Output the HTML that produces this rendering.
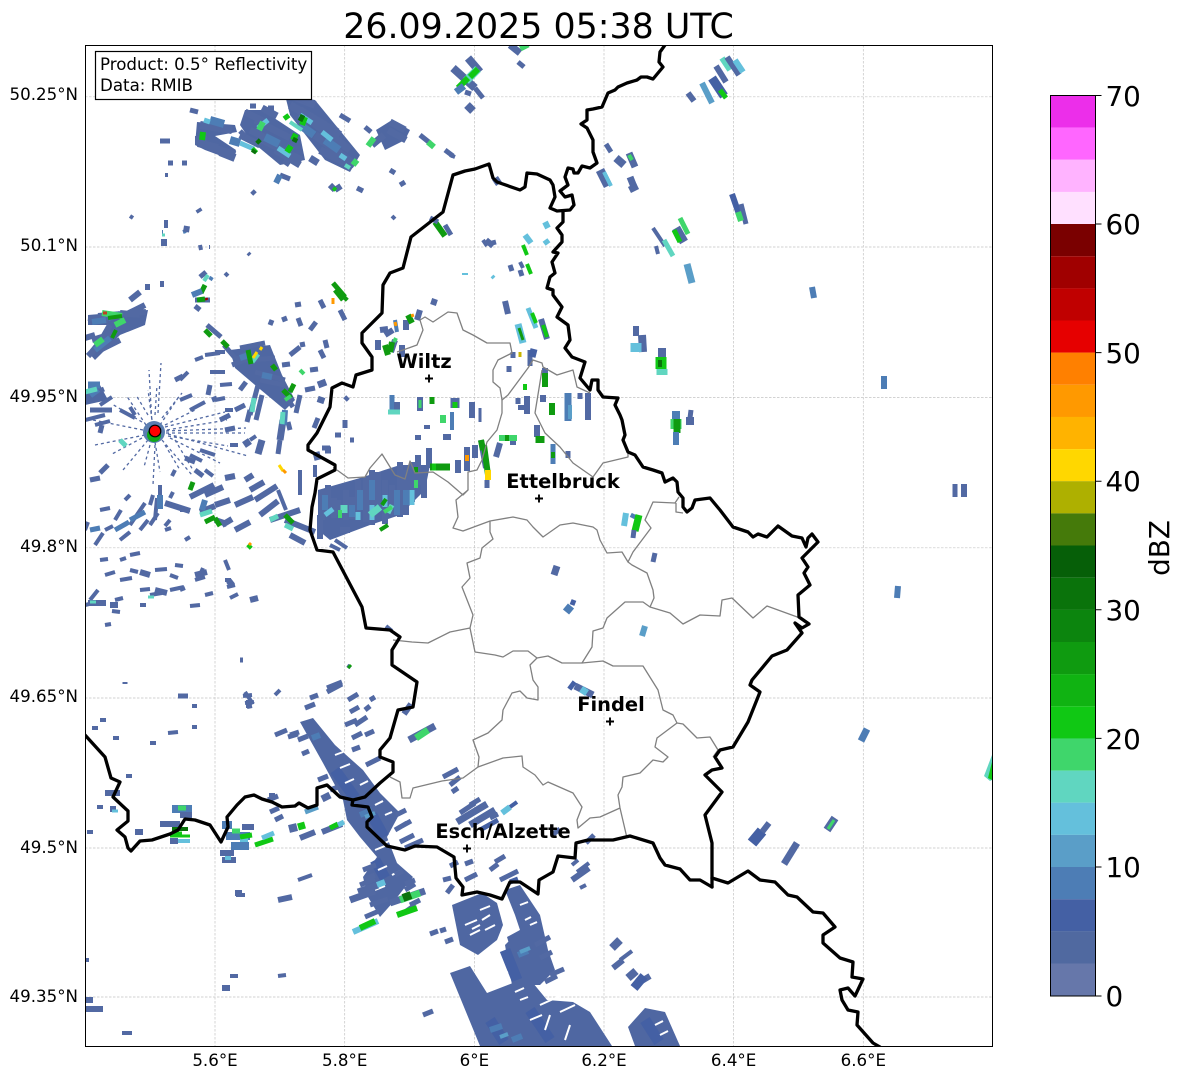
<!DOCTYPE html>
<html><head><meta charset="utf-8"><title>Radar</title>
<style>
html,body{margin:0;padding:0;background:#fff;width:1184px;height:1081px;overflow:hidden}
svg{display:block}
text{font-family:"DejaVu Sans",sans-serif;fill:#000}
.r path{fill:none}
.a{stroke:#5269a3}.b{stroke:#4460a4}.c{stroke:#4d7db5}.d{stroke:#5a9ec8}.e{stroke:#64c0dc}.f{stroke:#60d6c0}.g{stroke:#3fd66b}.h{stroke:#10c814}.i{stroke:#0f9b10}.j{stroke:#0a730b}
.s2{stroke-width:3}.s3{stroke-width:4}.s4{stroke-width:5}.s5{stroke-width:6}.s6{stroke-width:7}.s7{stroke-width:8}.s8{stroke-width:9}.s10{stroke-width:11}
.sp{stroke-width:1.3;stroke-dasharray:3 3}
</style></head><body>
<svg width="1184" height="1081" viewBox="0 0 1184 1081" xmlns="http://www.w3.org/2000/svg">
<defs><clipPath id="ax"><rect x="85" y="45" width="907" height="1001"/></clipPath></defs>
<rect width="1184" height="1081" fill="#fff"/>
<text x="538.5" y="38" font-size="34.8" text-anchor="middle">26.09.2025 05:38 UTC</text>

<g stroke="#c4c4c4" stroke-width=".7" stroke-dasharray="2.5 1.5">
<path d="M215 45V1046M344.7 45V1046M474.4 45V1046M604 45V1046M733.6 45V1046M863.3 45V1046M85 96.8H992M85 247H992M85 397.5H992M85 547.8H992M85 698H992M85 848H992M85 997H992" fill="none"/>
</g>

<g clip-path="url(#ax)" class="r">
<!-- south masses -->
<g fill="#4f67a2">
<polygon points="300,722 313,718 335,745 363,770 380,793 400,813 387,837 397,863 413,877 395,900 380,917 368,897 363,877 377,857 360,837 347,820 343,800 323,763"/>
<polygon points="450,973 470,966 487,993 513,983 513,957 507,937 520,930 543,967 533,983 547,1000 573,1002 590,1012 612,1046 480,1046"/>
<polygon points="452,905 482,893 497,903 503,925 497,940 478,955 460,945"/>
<polygon points="505,890 520,885 540,915 548,950 555,970 540,985 512,985 505,945 520,930 515,915"/>
<polygon points="628,1027 645,1008 665,1012 680,1046 635,1046"/>
<!-- NW -->
<polygon points="197,122 235,125 237,132 215,136 236,150 232,160 205,150 195,145"/>
<polygon points="245,110 262,110 300,135 305,160 280,165 250,140 240,125"/>
<polygon points="285,95 315,100 360,155 350,172 325,160 290,115"/>
<polygon points="376,130 392,120 410,130 405,140 385,150"/>
<!-- West -->
<polygon points="88,315 148,310 145,325 120,335 95,360 88,352 110,325 88,325"/>
<polygon points="230,350 270,345 282,375 295,400 285,410 255,385 235,368"/>
<polygon points="318,490 360,478 400,465 430,465 425,490 400,515 370,525 330,540 318,530"/>
<polygon points="85,392 100,385 108,400 85,405"/>
</g>
<path class="b s10" d="M505 950l12 30M490 1020l14 22M645 1020l14 22M335 770l20 28M372 815l12 22M530 1010l20 30M375 860l10 18"/>
<path class="c s5" d="M490 1030l12 -4M518 955l10 -4M312 738l8 -3M360 815l12 -5M512 1040l10 -4"/>
<path class="d s3" d="M520 952l10 -4M365 817l10 -4M500 1037l8 -3"/>
<path stroke="#fff" stroke-width="2" d="M335 755l8 -3M340 768l10 -4M345 783l9 -4M360 785l8 -4M375 805l8 -4M385 815l7 -3M395 838l-10 5M375 850l10 -4M378 870l9 -4M392 875l8 -4M375 890l10 -4M480 910l10 -4M465 925l12 -5M490 915l-8 5M470 935l10 -5M520 905l8 -3M530 925l7 -3M500 975l8 -3M515 992l9 -4M520 1000l8 -3M540 1005l20 -9M560 1012l15 -7M545 1030l5 -15M565 1040l5 -15M525 920l6 -3M485 930l10 -5M480 925l-8 4M530 1020l12 -5M655 1025l8 -4M660 1035l8 -4"/>
<!-- streaks around south -->
<path class="a s4" d="M305 708l10 -4M310 698l8 -3M275 735l12 -5M288 737l10 -3M302 754l7 -3M348 700l10 -6M350 712l9 -5M345 725l12 -5M352 738l10 -5M352 750l8 -3M365 735l9 -4M365 710l5 -4M370 700l5 -3M355 725l12 -8M327 692l15 -8M268 800l10 -4M270 812l9 -4M275 820l8 -4M330 790l8 -3M318 780l10 -4M366 765l14 -7M396 815l10 -5M395 830l12 -7M400 842l14 -7M405 848l18 -8M402 826l9 -5M363 870l13 -5M360 885l15 -6M375 875l-10 4M370 905l18 -6M365 917l14 -6M405 890l10 -6M395 875l8 -4M415 880l-10 4M410 905l10 -5M405 912l10 -7M443 777l15 -8M450 785l10 -8M452 792l6 -4M460 813l15 -10M470 805l10 -6M490 818l8 -4M552 835l8 -6M586 843l8 -8M430 934l8 -3M440 931l6 -2M445 942l8 -3M423 1015l10 -4M443 880l8 -2M447 893l6 -8M450 866l8 -4M465 880l12 -6M490 870l8 -6M500 880l18 -9M495 862l10 -6M465 864l8 -3M535 945l15 -8M540 958l12 -6M545 982l12 -6M550 975l14 -6M290 735l9 -3M298 740l10 -4"/>
<path class="a s6" d="M457 822l30 -18M470 825l25 -15M330 795l-8 4M358 892l20 -7M350 900l25 -9"/>
<path class="b s4" d="M480 830l18 -10M510 882l8 -3"/>
<path class="a s3" d="M572 865l6 -5M577 872l12 -9M620 960l12 -9M580 888l6 -3"/>
<path class="a s5" d="M572 880l17 -12M613 968l10 -8M640 982l10 -6M404 714l7 -10"/>
<path class="a s7" d="M612 948l8 -8M628 978l8 -7"/>
<path class="b s8" d="M634 988l10 -12"/>
<path class="a s6" d="M409 740l26 -14M390 903l35 -12"/>
<path class="g s6" d="M416 738l12 -8"/>
<path class="e s5" d="M353 932l25 -11M502 813l8 -6M377 885l8 -3"/>
<path class="h s5" d="M360 928l15 -7M397 915l20 -7"/>
<path class="g s6" d="M400 900l20 -7"/>
<path class="j s7" d="M403 898l8 -3"/>
<path class="b s3" d="M510 807l7 -5"/>
<!-- SW region -->
<path class="a s3" d="M243 696l9 -1M245 703l9 -1M247 707l5 -1M192 706l5 0M100 720h6M92 728h6M113 738h6M150 743h6M168 733l10 -1M192 727h5M126 776h6M97 807h6M87 832h6M245 895h-9M298 880l14 -5M230 976h8M278 976l8 -1M122 1033h10M85 960h4M275 795h-6"/>
<path class="a s5" d="M105 793h15M110 809h6M135 832h8M278 900l14 -3M222 988h8M85 1000h8M85 1009h18M235 893h7"/>
<path class="c s7" d="M172 809h20M222 825h10M226 836h24M231 846h18"/>
<path class="g s4" d="M178 808h8M232 831h8"/>
<path class="a s5" d="M180 815h12M160 824h20M170 841h8M220 853h14M222 860h14M242 827h12"/>
<path class="j s3" d="M172 829h16"/><path class="h s2" d="M170 836h20M172 833h10"/><path class="e s3" d="M178 841h12M240 840h8M225 858h6"/>
<path class="h s4" d="M240 837l12 -2M255 845l18 -6"/><path class="e s4" d="M262 838l12 -5"/>
<path class="a s7" d="M289 829l8 -2"/><path class="h s6" d="M298 827l7 -2"/>
<path class="a s5" d="M322 832l20 -8M300 838l15 -6"/><path class="h s4" d="M330 828l8 -4"/><path class="e s4" d="M338 825l6 -3"/>
<path class="d s4" d="M305 812l13 -5"/><path class="e s2" d="M112 811h6"/>
<!-- west scattered: lower left -->
<path class="a s3" d="M100 560l8 -1M105 575l10 -3M90 600l8 -10M85 605l12 -3M105 625l6 -1M120 580l12 -2M130 570l8 2M140 590l10 -1M150 595l12 -2M170 590l14 -3M155 570l12 -1M175 565l8 1M195 580l10 -3M200 575l3 -7M205 595l8 -2M225 580l6 0M170 575l8 3M115 600l8 -2M230 598l8 -4M235 585l-8 2M225 560l4 10M180 590l5 -2M200 605l-10 1M140 605l6 0M120 612l-8 -1"/>
<path class="a s5" d="M88 603h18M110 605h8M195 575l12 -3M140 572l10 3M155 590l12 3M228 585l5 -4M250 600l8 -2"/>
<path class="f s2" d="M90 602h6M148 597h6"/>
<path class="a s3" d="M100 510l10 -2M88 522l-3 8M105 530l8 -4M115 520l6 -10M120 540l10 -8M130 525l15 -22M140 530l8 -10M150 525l8 -12M95 545l8 -12M165 530l6 -2M170 498l3 -6M180 510l10 0M150 505l3 -10M155 520l2 -22M160 495l0 -10M125 500l5 -5M120 560l6 -2M130 555l10 -2M170 520l-5 6M185 540l5 -3"/>
<path class="c s4" d="M90 530l10 -2M115 530l14 -8M130 520l15 -8"/>
<path class="a s5" d="M165 503l25 8M190 497l24 -12M205 495l18 -8M200 512l15 -6M215 520l12 4M235 505l18 -8M255 500l22 -14M260 515l18 -14M270 520l30 -10M285 520l30 12M235 530l15 -8M222 525l10 -6M290 535l15 8M215 505l15 -5M245 480l8 -5M225 478l10 -2M250 490l14 -8"/>
<path class="f s4" d="M200 515l12 -4M270 520l8 -4M285 525l8 4"/>
<path class="i s4" d="M205 522l10 -5M215 518l5 8M285 515l8 8M190 490l3 -8"/>
<path class="c s5" d="M160 495l0 14M205 500l-3 10"/>
<path class="a sp" d="M160 433H245M165 427l60 -15M165 425l30 -15M160 425l20 -30M152 420l-4 -30M146 425l-20 -30M143 430l-50 -10M145 435l-50 10M148 440l-25 30M155 442l5 30M162 440l30 35M168 434l80 22M166 431l80 -3M167 430l60 -10M155 415l2 -30M152 425l-3 -55M158 413l3 -50M162 418l20 -25M148 415l-12 -20M142 422l-30 -18M142 438l-30 16M170 438l50 25M168 436l60 10M155 445l-2 40M165 445l15 25M175 440l18 30M150 445l-6 22"/>
<path d="M248 548l3 -3" stroke="#10c814" stroke-width="5"/><path d="M249 545l2 -2" stroke="#ff9900" stroke-width="3"/>
<!-- radar surroundings -->
<path class="a s3" d="M85 420l20 -5M95 425l15 -4M100 405l12 -8M120 410l15 8M135 415l-5 -8M180 400l12 -5M190 410l15 -8M180 380l8 -8M215 352l10 0M205 355l15 -2M195 360l8 -3M210 372h15M220 385l12 -1M225 410l8 0M215 400l10 -2M190 455l12 6M205 470l8 6M175 470l-3 6M200 450l15 5M230 445l8 0M250 440l6 -4"/>
<path class="a s4" d="M90 395l14 -6M90 410h22M102 425l-2 8M195 470l8 6M108 465l-8 8M90 480l10 -2M210 385l-2 10M175 380l8 -4M185 458l10 4"/>
<path class="c s6" d="M88 385h12M90 395l8 -6"/>
<path class="f s4" d="M85 392l12 -3M120 440l6 6"/>
<circle cx="154" cy="432" r="11" fill="#5a7db0"/><circle cx="154" cy="435" r="7" fill="#10a81a"/>
<!-- top-left blob -->
<path class="a s5" d="M88 318l20 2M98 316l48 -4M88 356l22 -22M100 350l20 -10M110 325l-8 14M120 313l20 2M92 340l20 -6M85 338l10 -3M130 300l10 -8M135 310l10 -5M145 287h5M125 315l10 -5"/>
<path class="c s5" d="M108 318l12 -4M95 350l15 -12M92 322l14 -2"/>
<path class="g s5" d="M102 313l20 3M115 325l10 -5M95 345l8 -6"/>
<path class="i s3" d="M108 318l14 -2M116 330l-4 8"/>
<path stroke="#c04020" stroke-width="3" d="M103 313h4"/>
<!-- mid-west -->
<path class="a s4" d="M200 277l6 -5M195 300h15M200 310l-5 -4M207 325l14 12M224 345l12 14M240 348l25 -5M235 360l15 -8M232 365l20 -8M250 360l25 -2M255 372l30 8M260 380l25 5M285 395l8 12M258 385l-8 30M262 395l-6 25M250 410l-3 12M282 365l8 -1M272 320l-2 5M282 320l5 -2M295 305l6 -1M298 318l3 8M300 345l5 -1M320 350l4 8M325 340l2 8M320 300l4 8M310 330l6 -8M340 310l5 10M240 390l6 -8M235 410l10 -5M225 430l10 -2M212 400l5 -2M220 420l10 -5M280 440l-2 14M290 430l-2 -8M300 395l-4 18M310 370l8 -1M290 355l10 -8M305 390l10 -2M318 418l-4 10M322 448h8M335 435h6M345 420v8M345 400l3 -3M350 440h4"/>
<path class="a s6" d="M318 385l8 -3M322 397l-2 6M283 420l-3 20M262 440l-4 14M244 445l6 -4M318 460l-2 -8M325 450h6"/>
<path class="c s5" d="M240 358l12 -4M262 375l10 2M285 410l-1 15"/>
<path class="f s4" d="M252 362l6 -8M254 398l-2 14M283 412l-1 12"/>
<path class="i s4" d="M248 350l3 14M205 330l6 6M197 300l8 -1M222 341l6 6M283 390l8 8M290 392l4 -8M272 365l4 5M335 290l8 10M344 300l3 -3"/>
<path class="g s3" d="M285 400l6 -4M300 370l4 4"/>
<path stroke="#ffd700" stroke-width="3" d="M257 352l-4 6M262 347l-2 3M279 465l4 6"/>
<path stroke="#ff9900" stroke-width="3" d="M333 298l0 6M283 470l3 3"/>
<path stroke="#a00000" stroke-width="3" d="M207 300l-1 -2"/>
<!-- Ettelbruck-west cluster -->
<path class="a s5" d="M322 490v30M328 485v28M334 498v20M338 500v15M346 490v30M352 497v22M358 480v36M366 477v45M372 470v55M378 472v40M385 480v44M392 485v30M400 462v55M406 470v45M412 462v40M418 455v30M424 470v28M429 448v20M320 515v24M340 530h10"/>
<path class="a s3" d="M300 470v25M315 465v12M278 490l8 20"/>
<path class="c s5" d="M325 495v15M397 490v25M372 480v20M360 490v20M406 490v15M352 505v12"/>
<path class="e s4" d="M372 505v15M412 490v15M325 515l8 -6M358 512v8M385 495v12"/>
<path class="f s6" d="M370 515l10 -8M344 505v8"/><path class="f s4" d="M392 505l-4 8"/>
<path class="g s3" d="M416 480v8M340 510v8M384 512l8 -5"/>
<path class="i s3" d="M382 505l4 -6M416 467v6M380 530l8 -5"/>
<!-- Wiltz top cluster -->
<path class="a s5" d="M378 340v10M385 335l8 -5M406 320v10M380 330l8 -1M395 340l-4 12M402 345v12M420 310l-3 10M433 305l2 -6"/>
<path class="i s5" d="M385 345l3 10M392 342l-2 10M408 315l4 8"/>
<path class="g s3" d="M396 338l-2 4"/>
<path class="c s3" d="M395 320l2 12"/>
<path stroke="#ff9900" stroke-width="3" d="M395 322l1 4M412 314l1 3"/>
<!-- centre -->
<path class="a s5" d="M505 301l3 13M541 319l6 20"/><path class="e s4" d="M528 308l8 20"/><path class="h s3" d="M532 313l4 10M543 325l4 12"/><path class="e s6" d="M518 324l5 19"/><path class="i s2" d="M519 328l4 12"/>
<path stroke="#c8b400" stroke-width="3" d="M520 352v5"/>
<path class="a s4" d="M530 350v16M513 352v6M509 366v6M518 398v6M580 393v6M568 451v7"/>
<path class="b s6" d="M534 349l-2 8"/>
<path class="a s5" d="M545 368v5M527 396v18M543 395v7M521 405v5M588 393v27"/>
<path class="i s5" d="M545 373v14M552 403v12"/><path class="h s3" d="M525 384v6"/>
<path class="c s6" d="M568 393v28"/><path class="d s3" d="M570 405v14"/>
<path class="a s5" d="M537 425v12"/><path class="i s8" d="M540 436v7"/>
<path class="c s4" d="M553 444v20"/><path class="i s3" d="M553 452v6"/>
<path class="c s4" d="M392 395v18"/><path class="a s5" d="M397 402v8M420 397v14M472 402v16M458 460v13M475 445v13M467 447v24M500 443l-4 14"/>
<path class="f s4" d="M388 412h12"/><path class="g s2" d="M420 400v8"/>
<path class="i s4" d="M432 397v7"/><path class="a s8" d="M455 398v10"/><path class="h s4" d="M455 402v6"/>
<path class="c s3" d="M452 412v18"/><path class="g s5" d="M443 415v8"/><path class="a s2" d="M480 408v14"/>
<path class="a s5" d="M443 437h8M427 425v4M418 435v5M513 440v5"/>
<path class="g s5" d="M499 438h18"/><path class="i s5" d="M505 438h4"/>
<path class="a s5" d="M481 440l5 28"/><path class="i s5" d="M484 445l4 30M481 440l2 10"/>
<path stroke="#ffd700" stroke-width="6" d="M488 470v10"/><path class="a s4" d="M487 480v8"/>
<path stroke="#ff9900" stroke-width="4" d="M467 455v6"/>
<path class="i s6" d="M430 467h20"/><path class="h s6" d="M432 467h4"/>
<!-- NE and isolated features -->
<path class="a s7" d="M453 68l22 20M468 58l12 14M467 105l6 6"/>
<path class="a s4" d="M475 88l8 10M465 92l6 2M518 62l6 5"/>
<path class="f s7" d="M466 81l12 -12"/><path class="h s5" d="M458 88l10 -10M470 77l8 -8"/><path class="c s6" d="M456 92l8 -6"/>
<path class="a s6" d="M510 45l10 8"/><path class="g s6" d="M520 48l8 -4"/>
<path class="a s5" d="M688 93l6 8M716 66l10 16"/><path class="d s5" d="M702 83l10 20"/><path class="f s5" d="M722 58l8 12"/>
<path class="a s5" d="M727 57l12 18"/><path class="b s8" d="M712 78l12 18"/><path class="h s4" d="M720 90l6 8"/><path class="e s5" d="M735 60l8 12"/>
<path class="a s4" d="M606 144l5 8"/><path class="a s7" d="M616 158l8 7"/><path class="a s6" d="M629 153l6 14M630 177l4 10"/><path class="a s8" d="M632 185l3 6"/><path class="g s3" d="M629 155l3 5"/>
<path class="a s8" d="M600 170l8 16"/><path class="e s3" d="M604 172l7 14"/>
<path class="a s6" d="M495 178l4 6"/>
<path class="b s5" d="M732 194l9 26"/><path class="a s4" d="M741 204l5 20"/><path class="g s5" d="M738 212l3 9"/>
<path class="a s3" d="M653 228l12 18"/><path class="f s4" d="M664 240l9 16"/><path class="a s3" d="M656 246l2 8"/>
<path class="a s8" d="M676 228l8 14"/><path class="h s4" d="M674 230l6 12"/><path class="g s4" d="M680 218l8 16"/>
<path class="d s6" d="M687 264l5 19"/>
<path class="c s5" d="M812 287l2 11M884 376v13M898 586l-1 12"/><path class="a s4" d="M955 484v13"/><path class="a s5" d="M964 484v13"/>
<path class="c s6" d="M867 729l-6 12"/><path class="a s7" d="M835 818l-8 12"/><path class="g s2" d="M834 820l-6 9"/>
<polygon points="992,755 984,776 990,781 992,780" fill="#60d6c0"/><polygon points="992,762 988,778 992,780" fill="#10c814"/>
<path class="b s10" d="M752 843l10 -12"/><path class="a s5" d="M762 832l7 -9"/><path class="a s6" d="M784 864L797 843"/>
<path class="d s5" d="M645 626l-3 10"/><path class="a s4" d="M655 553l-2 9"/><path class="a s6" d="M557 566l-3 9"/>
<path class="c s7" d="M566 612l5 -6"/><path class="b s4" d="M574 600l-2 5"/>
<path class="b s8" d="M570 684l4 3"/><path class="a s6" d="M575 686l18 9"/><path class="e s6" d="M581 689l6 4"/>
<path class="e s5" d="M626 513l-2 13"/><path class="c s4" d="M634 514l-2 4"/><path class="h s6" d="M639 515l-4 16"/><path class="a s4" d="M634 530l-1 8"/>
<path class="a s5" d="M636 326v10"/><path class="a s7" d="M642 335l1 17"/><path class="e s10" d="M636 343v9"/>
<path class="a s7" d="M662 348v12"/><path class="h s10" d="M661 357v12"/><path class="j s3" d="M660 360v7"/><path class="f s10" d="M662 369v6"/>
<path class="c s7" d="M676 411v8"/><path class="g s10" d="M676 419v10"/><path class="i s6" d="M677 419v14"/><path class="c s5" d="M676 432v13"/>
<path class="a s4" d="M691 410l-1 8"/><path class="a s7" d="M690 417v8"/>
<!-- NW cluster -->
<path stroke="#c9d6e6" stroke-width="5" d="M278 92l30 10"/>
<path class="a s7" d="M200 125l32 5M195 140l12 0M210 147l25 8M198 143l20 5M220 152l15 6M290 95l25 10M290 105l35 20M310 120l40 30M315 135l40 30M320 150l30 15M300 110l40 25"/>
<path class="a s6" d="M245 112l20 10M250 130l30 15M240 135l20 10M255 120l35 18M262 140l40 20M262 108l15 8M275 150l25 15M285 165l8 -12M405 130l-15 -8M388 130l18 10M372 145l12 -10M310 158l8 5"/>
<path class="a s4" d="M160 141h10M190 110l8 2M168 163h5M182 163h5M250 106h6M268 108h6M300 98l8 4M340 115l10 6M330 125l8 6M365 127l6 5M357 188l6 3M240 131l5 5M280 175l10 4M395 173l-5 -3M400 185l5 -3M420 135l10 8M445 150l8 6M252 191l3 3"/>
<path class="c s7" d="M210 120l14 4M265 137l14 7M300 125l14 10M325 140l14 10M230 140l10 3"/>
<path class="e s4" d="M210 122l-6 -2M258 128l10 -8M278 148l12 8M300 115l12 8M322 132l10 8M240 143l14 6M340 155l6 4"/>
<path class="f s3" d="M290 122l12 8M345 165l5 3"/>
<path class="g s5" d="M263 122l-4 8M357 160l-4 5M374 138l-6 8M428 142l6 5"/>
<path class="h s5" d="M203 132l-1 8M305 117l-3 8M287 152l4 -6M253 152l3 -3M293 140l3 -6M285 115l3 4"/>
<path class="j s4" d="M257 140l3 3M296 138l-2 4M255 150l-2 3M303 115l-3 6"/>
<path class="c s5" d="M280 175l-4 8"/>
<path class="a s5" d="M330 185l5 5M335 190l6 -4"/>
<path class="h s3" d="M333 188l3 2"/>
<path class="c s3" d="M162 232h1M183 232l3 -1M212 277l-2 3"/>
<path class="a s3" d="M165 175h3M200 245l1 5M166 220v8M210 247h-1M162 287v-6M130 216l3 2M248 253l2 2M225 273l3 3"/>
<path class="a s5" d="M187 226l-1 6M164 239v7M200 212l-2 -3"/>
<path class="f s2" d="M162 235h3"/>
<path class="i s4" d="M205 285l-4 8M333 283l12 14"/><path class="f s3" d="M208 275l-4 6"/><path class="c s5" d="M192 295l10 -4"/>
<!-- mid-top small bits -->
<path class="i s5" d="M435 222l10 14"/><path class="a s4" d="M430 218l8 4M445 225l6 10M492 243l4 -1M520 270l2 6M510 265l2 6"/>
<path class="e s5" d="M525 235l6 8M545 222l3 6M545 240l3 4M465 273v2"/><path class="h s3" d="M523 245l4 10M527 264l4 10"/>
<path class="a s3" d="M392 216l3 3M483 240l4 6M520 262l3 6"/>
<path class="a s5" d="M486 240l7 6"/><path class="e s3" d="M492 276l2 2"/>
<path class="a s3" d="M280 690l-5 5M245 692l8 12M248 700v8M350 665l-2 3M386 626l6 5"/><path class="i s2" d="M348 668l3 -3"/>
<path class="a s4" d="M327 688l15 -6M240 660h3M125 682v2M178 696h10"/>
<path class="a s3" d="M330 545l10 5M335 540l12 8M450 155l5 2"/>
</g>

<!-- grey lines -->
<g fill="none" stroke="#808080" stroke-width="1.3" stroke-linejoin="round">
<path d="M337 470L348 478L365 477L370 468L382 454L395 475L405 479L410 461L415 473L433 472L448 482L463 495L468 490L456 500L458 517L453 528L463 531L490 521L513 517L527 520L533 527L543 537L560 525L573 523L593 527L597 530L600 540L607 553L622 552L628 562L633 552L651 528L645 520L653 502L675 503L679 497M676 503L676 512L683 513"/>
<path d="M397 352L403 350L417 345L423 330L420 320L425 317L433 322L448 312L457 313L463 330L473 335L487 343L495 343L510 343L512 353L498 360L493 370L493 382L500 388L502 400L508 395L528 368L533 360L542 363L543 367L557 375L573 370L577 387L590 393"/>
<path d="M502 400L502 413L497 430L487 442L482 460L477 470L468 472L468 490"/>
<path d="M542 370L535 413L545 433L560 447L573 463L593 477L603 463L628 457L628 452"/>
<path d="M490 521L490 532L493 539L482 548L480 558L467 563L470 578L462 587L473 615L470 628L450 632L428 643L412 642L393 640M470 628L475 652L495 655L503 657L513 651L528 651L537 658"/>
<path d="M537 658L530 665L533 680L538 687L538 700L527 698L520 691L512 693L503 710L502 720L488 733L473 740L479 757L478 767L463 778L442 781L413 788L410 798L402 798L400 782L390 777"/>
<path d="M537 658L548 656L562 663L582 663L603 661L613 666L643 666L658 690L663 710L673 715L677 723L683 724L697 738L710 737L718 750L713 757"/>
<path d="M582 663L592 647L593 631L603 628L607 618L625 602L643 602L650 607L670 613L683 624L700 615L720 616L722 600L732 598L753 618L767 606L800 618"/>
<path d="M650 607L654 598L653 590L647 573L632 565L628 562"/>
<path d="M677 723L657 738L655 747L668 757L663 762L653 760L640 773L623 777L622 787L618 795L620 808L627 838"/>
<path d="M620 808L600 817L590 818L578 828L577 820L582 807L573 793L548 782L543 785L535 775L523 767L522 756L503 758L478 767"/>
</g>

<!-- thick borders -->
<g fill="none" stroke="#000" stroke-width="3.3" stroke-linejoin="round" stroke-linecap="round" clip-path="url(#ax)">
<path d="M665 45L660 52L659 62L663 67L658 73L653 79L647 77L641 77L637 80L627 83L618 87L615 90L608 93L602 107L593 109L587 110L587 120L581 124L587 128L593 140L593 152L597 163L590 168L582 166L578 173L574 173L573 169L568 168L565 177L568 185L560 191L565 197L572 195L574 205L570 210L557 211L550 208L555 197L553 185L550 180L537 174L527 173L525 187L520 190L497 182L493 178L489 164L475 169L465 171L453 175L443 212L411 237L403 268L390 273L383 285L382 313L362 333L362 343L372 357L372 370L356 375L353 387L342 383L332 388L330 407L317 433L308 445L308 450L335 465L335 470L317 479L315 493L312 507L310 530L317 550L333 552L362 607L366 628L390 630L400 637L392 650L392 665L417 682L413 707L398 710L390 738L380 750L380 757L393 762L393 772L380 783L365 797L353 800L352 805L368 807L372 817L367 822L367 827L387 846L405 850L415 846L437 847L454 857L456 878L463 887L462 895L477 892L490 895L502 899L510 882L520 882L538 894L539 880L553 872L558 856L575 858L576 843L588 840L613 840L630 836L653 843L660 858L665 865L680 869L690 880L700 880L712 887"/>
<path d="M563 211L563 222L557 228L562 235L562 242L553 252L558 253L552 262L555 273L550 277L547 288L553 290L553 295L562 307L557 317L568 325L570 340L565 348L572 357L585 362L580 378L590 390L592 380L598 380L598 390L603 397L618 398L615 405L620 415L622 420L625 435L623 440L628 452L635 455L643 467L653 470L662 473L665 482L673 478L677 482L678 492L683 498L683 507L687 512L692 508L695 500L710 498L720 510L733 527L748 532L753 537L758 534L767 537L778 526L792 536L802 538L806 547L808 538L812 534L818 542L802 558L808 567L804 573L810 585L798 595L799 617L809 624L802 628L795 623L802 633L787 650L772 656L752 680L750 685L760 692L748 722L733 747L720 750L715 757L722 768L712 770L705 775L722 792L705 815L712 843L712 887"/>
<path d="M712 878L728 883L748 871L760 880L775 882L788 895L797 897L813 912L823 913L835 927L823 935L823 943L840 958L853 962L852 977L863 979L855 996L848 988L840 990L842 1000L848 1010L858 1012L857 1025L873 1043L880 1047"/>
<path d="M85 735L105 757L111 778L120 782L113 797L128 811L128 821L117 830L125 837L128 848L131 851L140 841L152 840L170 834L178 830L185 819L195 820L210 825L221 842L228 827L227 817L237 805L245 797L254 795L262 799L272 802L282 807L295 806L299 803L308 808L317 805L317 788L327 785L340 797L353 800"/>
</g>

<!-- Radar marker -->
<circle cx="155" cy="431" r="5.8" fill="#f00" stroke="#000" stroke-width="1.2"/>

<!-- city labels -->
<g font-weight="bold" font-size="19.44" text-anchor="middle">
<text x="424" y="368">Wiltz</text><text x="563" y="488">Ettelbruck</text><text x="611" y="711">Findel</text><text x="503" y="838">Esch/Alzette</text>
</g>
<path d="M425 378.5h8M429 374.5v8M535 498.5h8M539 494.5v8M606 721.5h8M610 717.5v8M463 848.5h8M467 844.5v8" stroke="#000" stroke-width="1.9" fill="none"/>

<rect x="85.5" y="45.5" width="907" height="1001" fill="none" stroke="#000" stroke-width="1"/>

<!-- info box -->
<rect x="95.5" y="51.5" width="216" height="48" fill="#fff" stroke="#000" stroke-width="1.2"/>
<text x="100" y="70" font-size="16.67">Product: 0.5° Reflectivity</text>
<text x="100" y="91" font-size="16.67">Data: RMIB</text>

<!-- tick labels -->
<g font-size="16.67" text-anchor="end">
<text x="78" y="100">50.25°N</text><text x="78" y="251">50.1°N</text><text x="78" y="402">49.95°N</text><text x="78" y="552">49.8°N</text><text x="78" y="702">49.65°N</text><text x="78" y="853">49.5°N</text><text x="78" y="1002">49.35°N</text>
</g>
<g font-size="16.67" text-anchor="middle">
<text x="215" y="1066">5.6°E</text><text x="344.7" y="1066">5.8°E</text><text x="474.4" y="1066">6°E</text><text x="604" y="1066">6.2°E</text><text x="733.6" y="1066">6.4°E</text><text x="863.3" y="1066">6.6°E</text>
</g>

<!-- colorbar -->
<g>
<rect x="1051" y="95.5" width="44.5" height="32.2" fill="#ec2eea"/>
<rect x="1051" y="127.6" width="44.5" height="32.2" fill="#ff66ff"/>
<rect x="1051" y="159.8" width="44.5" height="32.2" fill="#ffb3ff"/>
<rect x="1051" y="191.9" width="44.5" height="32.2" fill="#ffe0ff"/>
<rect x="1051" y="224" width="44.5" height="32.2" fill="#7a0000"/>
<rect x="1051" y="256.2" width="44.5" height="32.2" fill="#a00000"/>
<rect x="1051" y="288.3" width="44.5" height="32.2" fill="#c00000"/>
<rect x="1051" y="320.5" width="44.5" height="32.2" fill="#e60000"/>
<rect x="1051" y="352.6" width="44.5" height="32.2" fill="#ff8000"/>
<rect x="1051" y="384.8" width="44.5" height="32.2" fill="#ff9900"/>
<rect x="1051" y="416.9" width="44.5" height="32.2" fill="#ffb300"/>
<rect x="1051" y="449.1" width="44.5" height="32.2" fill="#ffd700"/>
<rect x="1051" y="481.2" width="44.5" height="32.2" fill="#aeb000"/>
<rect x="1051" y="513.4" width="44.5" height="32.2" fill="#457a0a"/>
<rect x="1051" y="545.5" width="44.5" height="32.2" fill="#065f08"/>
<rect x="1051" y="577.7" width="44.5" height="32.2" fill="#0a730b"/>
<rect x="1051" y="609.8" width="44.5" height="32.2" fill="#0c850e"/>
<rect x="1051" y="642" width="44.5" height="32.2" fill="#0f9b10"/>
<rect x="1051" y="674.1" width="44.5" height="32.2" fill="#10b312"/>
<rect x="1051" y="706.3" width="44.5" height="32.2" fill="#10c814"/>
<rect x="1051" y="738.4" width="44.5" height="32.2" fill="#3fd66b"/>
<rect x="1051" y="770.6" width="44.5" height="32.2" fill="#60d6c0"/>
<rect x="1051" y="802.7" width="44.5" height="32.2" fill="#64c0dc"/>
<rect x="1051" y="834.9" width="44.5" height="32.2" fill="#5a9ec8"/>
<rect x="1051" y="867" width="44.5" height="32.2" fill="#4d7db5"/>
<rect x="1051" y="899.2" width="44.5" height="32.2" fill="#4460a4"/>
<rect x="1051" y="931.3" width="44.5" height="32.2" fill="#5069a0"/>
<rect x="1051" y="963.5" width="44.5" height="32.5" fill="#6677aa"/>
<rect x="1050.5" y="95.5" width="45" height="900.5" fill="none" stroke="#000" stroke-width="1"/>
<path d="M1095.5 95.5h6M1095.5 224h6M1095.5 352.6h6M1095.5 481.2h6M1095.5 609.8h6M1095.5 738.4h6M1095.5 867h6M1095.5 996h6" stroke="#000" stroke-width="1" fill="none"/>
</g>
<g font-size="27.78">
<text x="1105.5" y="106">70</text><text x="1105.5" y="234">60</text><text x="1105.5" y="363">50</text><text x="1105.5" y="491">40</text><text x="1105.5" y="620">30</text><text x="1105.5" y="749">20</text><text x="1105.5" y="877">10</text><text x="1105.5" y="1006">0</text>
</g>
<text transform="translate(1169 548) rotate(-90)" font-size="27.78" text-anchor="middle">dBZ</text>
</svg>
</body></html>
